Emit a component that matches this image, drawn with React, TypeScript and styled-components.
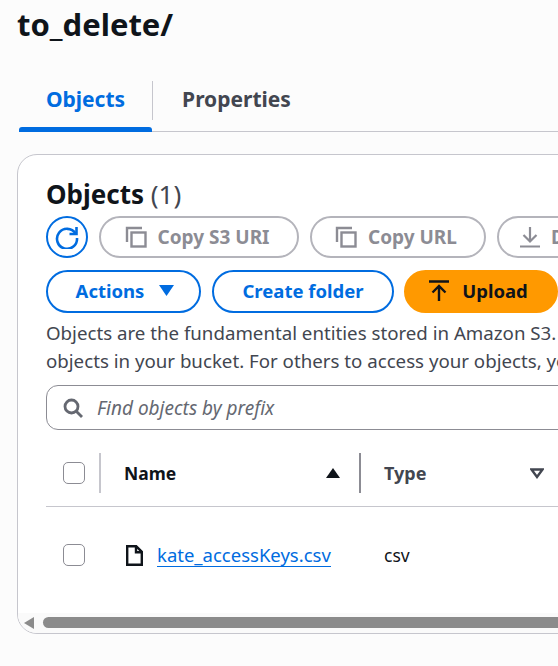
import styled, { createGlobalStyle } from 'styled-components';

const BLUE = '#006ce0';
const INK = '#0f141a';
const GREY = '#424650';
const DISABLED = '#8c8c94';

const GlobalStyle = createGlobalStyle`
  html, body {
    margin: 0;
    padding: 0;
    background: #fcfcfc;
  }

  body {
    font-family: 'Noto Sans', 'Open Sans', sans-serif;
    color: ${INK};
  }
`;

const Page = styled.div`
  width: 558px;
  height: 666px;
  overflow: hidden;
  padding: 5px 0 0 17px;
  box-sizing: border-box;
`;

const Title = styled.h1`
  margin: 0 0 37px;
  height: 38px;
  font-size: 31px;
  line-height: 38px;
  font-weight: 700;
`;

const Tabs = styled.div`
  display: flex;
  width: 700px;
  height: 51px;
  margin-left: 2px;
  border-bottom: 1px solid #c6c6cd;
  box-sizing: content-box;
`;

const Tab = styled.div<{ $active?: boolean }>`
  position: relative;
  display: flex;
  align-items: center;
  justify-content: center;
  height: 39px;
  margin-top: 1px;
  padding-bottom: 3px;
  width: ${(p) => (p.$active ? '134px' : '167px')};
  border-right: ${(p) => (p.$active ? '1px solid #c6c6cd' : 'none')};
  box-sizing: border-box;
  font-size: 21px;
  font-weight: 700;
  color: ${(p) => (p.$active ? BLUE : GREY)};

  ${(p) =>
    p.$active &&
    `
    &:after {
      content: '';
      position: absolute;
      left: 0;
      right: 0;
      bottom: -12px;
      height: 5px;
      border-radius: 3px 3px 0 0;
      background: ${BLUE};
    }
  `}
`;

const Card = styled.section`
  width: 800px;
  height: 480px;
  margin-top: 22px;
  border: 1px solid #c6c6cd;
  border-radius: 20px;
  background: #fff;
  box-sizing: border-box;
  overflow: hidden;
  display: flex;
  flex-direction: column;
`;

const CardBody = styled.div`
  flex: 1;
  padding: 21px 0 0 28px;
`;

const CardTitle = styled.h2`
  margin: 0 0 4px;
  height: 36px;
  font-size: 26px;
  line-height: 36px;
  font-weight: 700;

  span {
    font-weight: 400;
    color: ${GREY};
  }
`;

const ButtonRow = styled.div`
  display: flex;
  gap: 11px;
  margin-bottom: 12px;
`;

const SecondRow = styled(ButtonRow)`
  gap: 10px;
  margin-bottom: 0;

  > :first-child {
    margin-right: 1px;
  }
`;

const RoundButton = styled.div`
  display: flex;
  align-items: center;
  justify-content: center;
  width: 42px;
  height: 42px;
  border: 2px solid ${BLUE};
  border-radius: 50%;
  box-sizing: border-box;
  color: ${BLUE};
`;

const DisabledButton = styled.div<{ $width: number }>`
  display: flex;
  align-items: center;
  justify-content: center;
  gap: 11px;
  flex-shrink: 0;
  width: ${(p) => p.$width}px;
  height: 42px;
  padding-right: 4px;
  border: 2px solid #b4b4bb;
  border-radius: 21px;
  box-sizing: border-box;
  font-size: 19px;
  font-weight: 700;
  color: ${DISABLED};
`;

const ActionButton = styled.div<{ $width: number; $primary?: boolean }>`
  display: flex;
  align-items: center;
  justify-content: center;
  gap: ${(p) => (p.$primary ? '13px' : '15px')};
  flex-shrink: 0;
  width: ${(p) => p.$width}px;
  height: 43px;
  padding: 0 ${(p) => (p.$primary ? '5px' : '0')} 2px 0;
  border: 2px solid ${(p) => (p.$primary ? '#ff9900' : BLUE)};
  border-radius: 22px;
  box-sizing: border-box;
  background: ${(p) => (p.$primary ? '#ff9900' : '#fff')};
  font-size: 18.5px;
  font-weight: 700;
  color: ${(p) => (p.$primary ? INK : BLUE)};
`;

const ActionsLabel = styled.span`
  margin-left: 3px;
`;

const Description = styled.p`
  margin: 6px 0 10px;
  font-size: 18.7px;
  line-height: 28px;
  color: ${GREY};
  white-space: nowrap;
`;

const SearchBox = styled.div`
  display: flex;
  align-items: center;
  gap: 14px;
  width: 740px;
  height: 45px;
  padding-left: 16px;
  border: 1px solid #8c8c94;
  border-radius: 12px;
  box-sizing: border-box;
  font-size: 19px;
  font-style: italic;
  color: #656871;
`;

const TableHeader = styled.div`
  display: grid;
  grid-template-columns: 53px 260px 200px;
  align-items: center;
  height: 77px;
  width: 740px;
  padding-top: 10px;
  border-bottom: 1px solid #c6c6cd;
  box-sizing: border-box;
`;

const CheckCell = styled.div`
  display: flex;
  align-items: center;
  padding-left: 17px;
`;

const Checkbox = styled.div`
  width: 22px;
  height: 22px;
  border: 1px solid #8c8c94;
  border-radius: 5px;
  box-sizing: border-box;
  background: #fff;
`;

const HeaderCell = styled.div<{ $muted?: boolean }>`
  display: flex;
  align-items: center;
  justify-content: space-between;
  height: 40px;
  padding: 0 ${(p) => (p.$muted ? '15px' : '19px')} 0 23px;
  border-left: 2px solid ${(p) => (p.$muted ? '#8c8c94' : '#c6c6cd')};
  font-size: ${(p) => (p.$muted ? '18px' : '17.5px')};
  font-weight: 700;
  color: ${(p) => (p.$muted ? GREY : INK)};
`;

const TableRow = styled.div`
  display: grid;
  grid-template-columns: 53px 260px 180px;
  align-items: center;
  height: 96px;
  width: 740px;
  font-size: 17.5px;
  color: ${INK};
`;

const FileCell = styled.div`
  display: flex;
  align-items: center;
  gap: 14px;
  padding-left: 27px;
  white-space: nowrap;
`;

const FileLink = styled.a`
  color: ${BLUE};
  font-size: 18.5px;
  text-decoration: none;
  border-bottom: 1px solid ${BLUE};
  line-height: 23px;
`;

const TypeCell = styled.div`
  padding-left: 25px;
`;

const Scrollbar = styled.div`
  display: flex;
  align-items: center;
  gap: 9px;
  height: 20px;
  padding: 0 0 1px 6px;
  box-sizing: border-box;
  background: #fafafa;
`;

const ScrollThumb = styled.div`
  width: 740px;
  height: 11px;
  border-radius: 6px;
  background: #8b8b8b;
`;

const CopyIcon = () => (
  <svg width="22" height="22" viewBox="0 0 22 22" fill="none" stroke="currentColor" strokeWidth="2.4">
    <path d="M2 16V2h15" />
    <rect x="6.5" y="6.5" width="14" height="14" />
  </svg>
);

const App = () => {
  return (
    <>
      <GlobalStyle />
      <Page>
        <Title>to_delete/</Title>
        <Tabs>
          <Tab $active>Objects</Tab>
          <Tab>Properties</Tab>
        </Tabs>
        <Card>
          <CardBody>
            <CardTitle>
              Objects <span>(1)</span>
            </CardTitle>
            <ButtonRow>
              <RoundButton>
                <svg width="24" height="24" viewBox="0 0 24 24" fill="none" stroke="currentColor" strokeWidth="2.6">
                  <path d="M20.5 8.5A10 10 0 1 0 22 13" />
                  <path d="M21.5 2v7h-7" />
                </svg>
              </RoundButton>
              <DisabledButton $width={200}>
                <CopyIcon />
                Copy S3 URI
              </DisabledButton>
              <DisabledButton $width={176}>
                <CopyIcon />
                Copy URL
              </DisabledButton>
              <DisabledButton $width={176}>
                <svg width="20" height="22" viewBox="0 0 20 22" fill="none" stroke="currentColor" strokeWidth="2.2">
                  <path d="M10 1v14M3.500 9l6.500 6.500L16.500 9M0 20.500h20" />
                </svg>
                Download
              </DisabledButton>
            </ButtonRow>
            <SecondRow>
              <ActionButton $width={155}>
                <ActionsLabel>Actions</ActionsLabel>
                <svg width="15" height="11" viewBox="0 0 15 11" fill="currentColor">
                  <path d="M0 0h15L7.500 11z" />
                </svg>
              </ActionButton>
              <ActionButton $width={182}>Create folder</ActionButton>
              <ActionButton $width={154} $primary>
                <svg width="20" height="22" viewBox="0 0 20 22" fill="none" stroke="currentColor" strokeWidth="2.4">
                  <path d="M0 1.500h20M10 21V7M3.500 12.500L10 6l6.500 6.500" />
                </svg>
                Upload
              </ActionButton>
            </SecondRow>
            <Description>
              Objects are the fundamental entities stored in Amazon S3. You can use Amazon S3 inventory to get a list
              <br />
              objects in your bucket. For others to access your objects, you'll need to explicitly grant them permissions.
            </Description>
            <SearchBox>
              <svg width="20" height="20" viewBox="0 0 20 20" fill="none" stroke="#656871" strokeWidth="2.8">
                <circle cx="8.500" cy="8.500" r="6.500" />
                <path d="M13 13l6 6" />
              </svg>
              Find objects by prefix
            </SearchBox>
            <TableHeader>
              <CheckCell>
                <Checkbox />
              </CheckCell>
              <HeaderCell>
                Name
                <svg width="14" height="10" viewBox="0 0 14 10" fill={INK}>
                  <path d="M7 0l7 10H0z" />
                </svg>
              </HeaderCell>
              <HeaderCell $muted>
                Type
                <svg width="14" height="11" viewBox="0 0 14 11" fill="none" stroke={GREY} strokeWidth="2.4">
                  <path d="M1.500 1.500h11L7 9z" />
                </svg>
              </HeaderCell>
            </TableHeader>
            <TableRow>
              <CheckCell>
                <Checkbox />
              </CheckCell>
              <FileCell>
                <svg width="17" height="21" viewBox="0 0 17 21" fill="none" stroke={INK} strokeWidth="2.4">
                  <path d="M1.200 1.200h9l5.600 5.600v13H1.200zM10 1.500V7.200h5.500" />
                </svg>
                <FileLink href="#">kate_accessKeys.csv</FileLink>
              </FileCell>
              <TypeCell>csv</TypeCell>
            </TableRow>
          </CardBody>
          <Scrollbar>
            <svg width="10" height="12" viewBox="0 0 10 12" fill="#8b8b8b">
              <path d="M10 0v12L0 6z" />
            </svg>
            <ScrollThumb />
          </Scrollbar>
        </Card>
      </Page>
    </>
  );
};

export default App;
